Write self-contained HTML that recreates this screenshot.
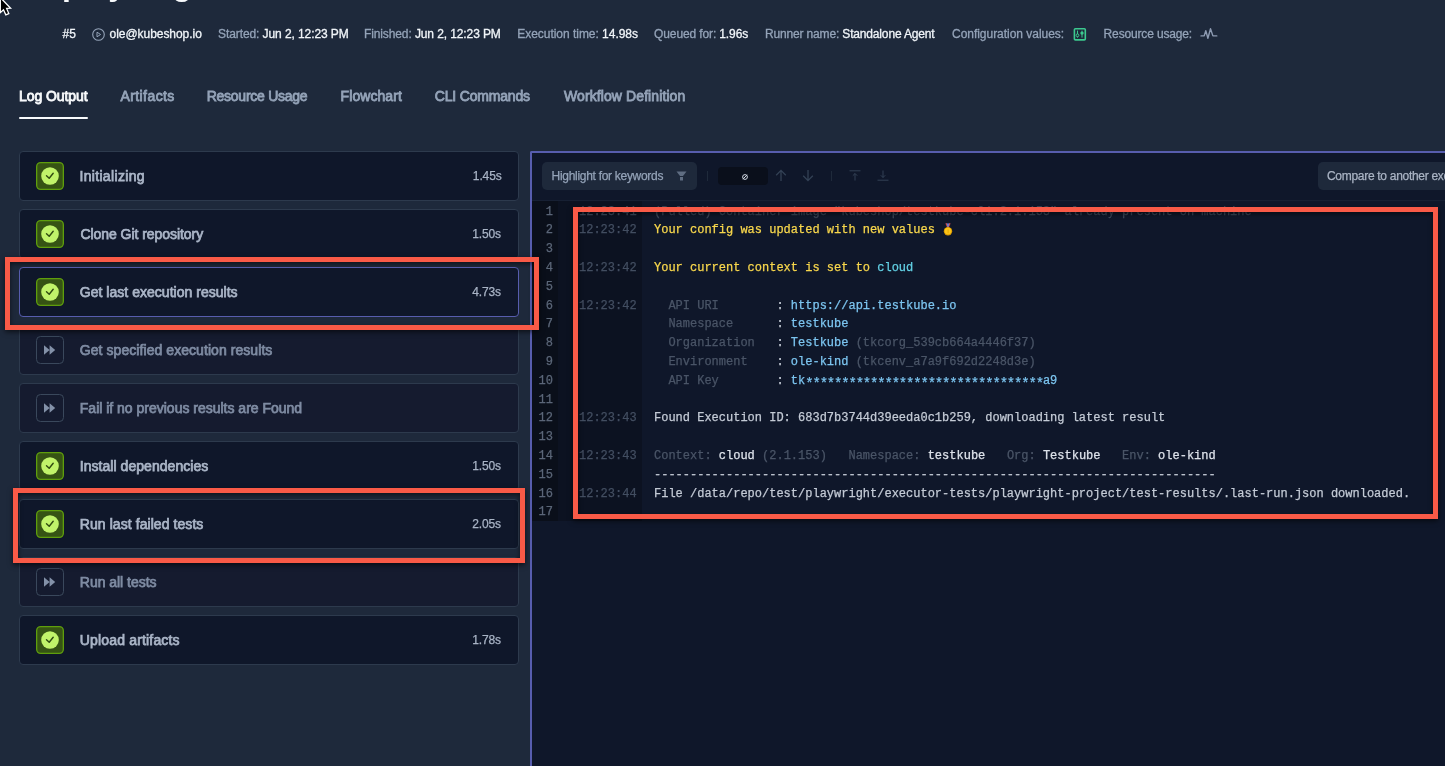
<!DOCTYPE html>
<html><head><meta charset="utf-8">
<style>
*{margin:0;padding:0;box-sizing:border-box}
html,body{width:1445px;height:766px;overflow:hidden;background:#1e293b;font-family:"Liberation Sans",sans-serif}
.a{position:absolute;white-space:pre}
body>*{will-change:transform}
.title{left:62px;top:-34px;font-size:32px;font-weight:700;color:#f8fafc}
.meta{top:27px;font-size:12px;line-height:14px;color:#94a3b8}
.meta b{font-weight:400;color:#f1f5f9}
.meta{-webkit-text-stroke:.3px currentColor}
.tab{top:88px;font-size:14px;line-height:16px;color:#94a3b8;-webkit-text-stroke:.8px currentColor}
.tab.on{color:#f8fafc}
.ul{position:absolute;left:19px;top:117px;width:69px;height:2px;background:#f8fafc;border-radius:1px}
.card{position:absolute;left:19px;width:500px;height:50px;background:#0f172a;border:1px solid #2d3a4d;border-radius:4px}
.card.sel{border-color:#575dae}
.card .ic{position:absolute;left:16px;top:10px;width:28px;height:28px}
.card .nm{position:absolute;left:60px;top:15.5px;font-size:14px;line-height:16px;color:#a9b4c6;-webkit-text-stroke:.75px currentColor;white-space:pre}
.card.sk{background:#151b2f}
.card.sk .nm{color:#7e8ba2}
.card .du{position:absolute;right:16px;top:17px;font-size:12px;line-height:14px;color:#a9b4c6;-webkit-text-stroke:.25px currentColor}
.red{position:absolute;border:5px solid #f95a47;box-shadow:0 2px 5px rgba(0,0,0,.6),inset 0 2px 5px rgba(0,0,0,.55)}
.panel{position:absolute;left:530px;top:151px;width:930px;height:640px;background:#0f172a;border-left:2px solid #575dae;border-top:2px solid #575dae;border-top-left-radius:2px}
.mono{font-family:"Liberation Mono",monospace;font-size:12px}
.hl{font-size:12px;line-height:14px;color:#94a3b8;-webkit-text-stroke:.25px currentColor}
.code{font-family:"Liberation Mono",monospace;font-size:12px;line-height:18.8px;top:49.6px;white-space:pre;-webkit-text-stroke:.25px currentColor}
.ln{left:0;width:21px;text-align:right;color:#5b6678}
.ts{left:47px;color:#434e61}
.tx{left:122px;color:#c4cbd6}
.st{font-size:14px;letter-spacing:-1.2px;line-height:0;position:relative;top:4px}
.dm{color:#3e4859}.yl{color:#f8d74c}.cy{color:#62d0e4}.bl{color:#7cc5f0}.lb{color:#4a5567}.wh{color:#c4cbd6}.br{color:#dde2ea}
</style>
<style id="cal">#c1{letter-spacing:0.336px;translate:-0.60px 0}#c2{letter-spacing:-0.047px;translate:0.40px 0}#c3{letter-spacing:0.024px;translate:-0.20px 0}#c4{letter-spacing:0.063px;translate:-0.20px 0}#c5{letter-spacing:-0.006px;translate:-0.20px 0}#c6{letter-spacing:0.042px;translate:-0.20px 0}#c7{letter-spacing:0.070px;translate:-0.20px 0}#c8{letter-spacing:-0.024px;translate:-0.20px 0}#c9{letter-spacing:0.167px;translate:-0.20px 0}#cmp{letter-spacing:-0.296px;translate:0.00px 0}#d1{letter-spacing:-0.125px;translate:-0.40px 0}#d2{letter-spacing:-0.125px;translate:-1.00px 0}#d3{letter-spacing:-0.125px;translate:-1.00px 0}#d4{letter-spacing:-0.125px;translate:-1.00px 0}#d5{letter-spacing:-0.125px;translate:-1.00px 0}#d6{letter-spacing:-0.125px;translate:-1.00px 0}#hl{letter-spacing:-0.296px;translate:-0.40px 0}#m1{letter-spacing:0.100px;translate:0.40px 0}#m2{letter-spacing:-0.050px;translate:-0.40px 0}#m3{letter-spacing:-0.087px;translate:0.00px 0}#m4{letter-spacing:-0.104px;translate:-1.10px 0}#m5{letter-spacing:-0.029px;translate:0.20px 0}#m6{letter-spacing:-0.125px;translate:0.10px 0}#m7{letter-spacing:-0.161px;translate:0.00px 0}#m8{letter-spacing:-0.030px;translate:1.00px 0}#m9{letter-spacing:-0.157px;translate:0.60px 0}#t1{letter-spacing:-0.068px;translate:0.00px 0}#t2{letter-spacing:0.425px;translate:0.40px 0}#t3{letter-spacing:-0.255px;translate:-0.30px 0}#t4{letter-spacing:0.062px;translate:0.60px 0}#t5{letter-spacing:-0.172px;translate:0.70px 0}#t6{letter-spacing:0.095px;translate:1.00px 0}</style></head><body>
<svg width="0" height="0" style="position:absolute"><defs>
<g id="iok"><rect x="0.65" y="0.65" width="26.7" height="26.7" rx="4" fill="#365314" stroke="#5f9e0c" stroke-width="1.3"/><circle cx="14" cy="14" r="8.8" fill="#c1f36a"/><path d="M10.5 13.8L13.2 16.3L17.2 11.2" fill="none" stroke="#2f4a10" stroke-width="1.4" stroke-linecap="round" stroke-linejoin="round"/></g>
<g id="isk"><rect x="0.5" y="0.5" width="27" height="27" rx="4" fill="none" stroke="#3a485c" stroke-width="1"/><path d="M8 9.2v9.6l5.6-4.8zM13.6 9.2v9.6l5.6-4.8z" fill="#8391a8"/></g>
</defs></svg>

<div class="a title">playwright</div>

<div id="m1" class="a meta" style="left:62px"><b>#5</b></div>
<svg class="a" style="left:92px;top:28px" width="13" height="13" viewBox="0 0 13 13"><circle cx="6.5" cy="6.5" r="5.8" fill="none" stroke="#94a3b8" stroke-width="1.1"/><path d="M5 4.2v4.6l3.6-2.3z" fill="none" stroke="#94a3b8" stroke-width="1" stroke-linejoin="round"/></svg>
<div id="m2" class="a meta" style="left:110px"><b>ole@kubeshop.io</b></div>
<div id="m3" class="a meta" style="left:218px">Started: <b>Jun 2, 12:23 PM</b></div>
<div id="m4" class="a meta" style="left:365px">Finished: <b>Jun 2, 12:23 PM</b></div>
<div id="m5" class="a meta" style="left:517px">Execution time: <b>14.98s</b></div>
<div id="m6" class="a meta" style="left:654px">Queued for: <b>1.96s</b></div>
<div id="m7" class="a meta" style="left:765px">Runner name: <b>Standalone Agent</b></div>
<div id="m8" class="a meta" style="left:951px">Configuration values:</div>
<div id="m9" class="a meta" style="left:1103px">Resource usage:</div>

<svg class="a" style="left:1072px;top:27px" width="16" height="15" viewBox="1072 27 16 15"><rect x="1074.4" y="28.7" width="10.9" height="11.2" rx="1" fill="none" stroke="#3cc98f" stroke-width="1.6"/><path d="M1077.5 30.6v7M1082 30.6v7" stroke="#3cc98f" stroke-width="1"/><circle cx="1077.5" cy="35.3" r="1.4" fill="#1e293b" stroke="#3cc98f" stroke-width="1"/><circle cx="1082" cy="33.1" r="1.7" fill="#3cc98f"/></svg>
<svg class="a" style="left:1199px;top:26px" width="20" height="15" viewBox="1199 26 20 15"><path d="M1201 35.9H1204.2L1205.8 30.6L1207.9 38.3L1210.5 28.8L1212.9 35.9H1216.8" fill="none" stroke="#8d9bb2" stroke-width="1.4" stroke-linejoin="round" stroke-linecap="round"/></svg>
<div id="t1" class="a tab on" style="left:19px">Log Output</div>
<div id="t2" class="a tab" style="left:120px">Artifacts</div>
<div id="t3" class="a tab" style="left:207px">Resource Usage</div>
<div id="t4" class="a tab" style="left:340px">Flowchart</div>
<div id="t5" class="a tab" style="left:434px">CLI Commands</div>
<div id="t6" class="a tab" style="left:563px">Workflow Definition</div>
<div class="ul"></div>

<div class="card" style="top:151px"><svg class="ic" width="28" height="28" viewBox="0 0 28 28"><use href="#iok"/></svg><div id="c1" class="nm">Initializing</div><div id="d1" class="du">1.45s</div></div>
<div class="card" style="top:209px"><svg class="ic" width="28" height="28" viewBox="0 0 28 28"><use href="#iok"/></svg><div id="c2" class="nm">Clone Git repository</div><div id="d2" class="du">1.50s</div></div>
<div class="card sel" style="top:267px"><svg class="ic" width="28" height="28" viewBox="0 0 28 28"><use href="#iok"/></svg><div id="c3" class="nm">Get last execution results</div><div id="d3" class="du">4.73s</div></div>
<div class="card sk" style="top:325px"><svg class="ic" width="28" height="28" viewBox="0 0 28 28"><use href="#isk"/></svg><div id="c4" class="nm">Get specified execution results</div></div>
<div class="card sk" style="top:383px"><svg class="ic" width="28" height="28" viewBox="0 0 28 28"><use href="#isk"/></svg><div id="c5" class="nm">Fail if no previous results are Found</div></div>
<div class="card" style="top:441px"><svg class="ic" width="28" height="28" viewBox="0 0 28 28"><use href="#iok"/></svg><div id="c6" class="nm">Install dependencies</div><div id="d4" class="du">1.50s</div></div>
<div class="card" style="top:499px"><svg class="ic" width="28" height="28" viewBox="0 0 28 28"><use href="#iok"/></svg><div id="c7" class="nm">Run last failed tests</div><div id="d5" class="du">2.05s</div></div>
<div class="card sk" style="top:557px"><svg class="ic" width="28" height="28" viewBox="0 0 28 28"><use href="#isk"/></svg><div id="c8" class="nm">Run all tests</div></div>
<div class="card" style="top:615px"><svg class="ic" width="28" height="28" viewBox="0 0 28 28"><use href="#iok"/></svg><div id="c9" class="nm">Upload artifacts</div><div id="d6" class="du">1.78s</div></div>

<div class="panel">
 <div class="a" style="left:10px;top:9px;width:155px;height:28px;background:#1e293b;border-radius:5px"></div>
 <div id="hl" class="a hl" style="left:20px;top:16px">Highlight for keywords</div>
 <svg class="a" style="left:144px;top:18px" width="11" height="10" viewBox="0 0 11 10"><path d="M0.5 0.5h10l-3.5 4.5h-3z" fill="#5f6d82"/><rect x="4" y="6" width="3" height="3.5" fill="#5f6d82"/></svg>
 <div class="a" style="left:175px;top:18px;width:1px;height:10px;background:#1f2a3b"></div>
 <div class="a" style="left:186px;top:14px;width:50px;height:18px;background:#0a0f1b;border-radius:4px"></div>
 <svg class="a" style="left:208.5px;top:19.5px" width="8" height="8" viewBox="0 0 8 8"><circle cx="4" cy="4" r="2.4" fill="none" stroke="#cfd6e0" stroke-width="1"/><path d="M1.8 6.2l4.4-4.4" stroke="#cfd6e0" stroke-width="1"/></svg>
 <svg class="a" style="left:243px;top:16px" width="12" height="13" viewBox="0 0 12 13"><path d="M6 12V1.5M1.2 6.2L6 1.4l4.8 4.8" fill="none" stroke="#334155" stroke-width="1.3"/></svg>
 <svg class="a" style="left:270px;top:16px" width="12" height="13" viewBox="0 0 12 13"><path d="M6 1v10.5M1.2 6.8L6 11.6l4.8-4.8" fill="none" stroke="#334155" stroke-width="1.3"/></svg>
 <div class="a" style="left:299px;top:18px;width:1px;height:10px;background:#1f2a3b"></div>
 <svg class="a" style="left:317px;top:16px" width="12" height="13" viewBox="0 0 12 13"><path d="M0.5 1.8h11M6 11.5V4.5M3.8 6.7L6 4.5 8.2 6.7" fill="none" stroke="#334155" stroke-width="1"/></svg>
 <svg class="a" style="left:345px;top:16px" width="12" height="13" viewBox="0 0 12 13"><path d="M0.5 11.2h11M6 1.5v7M3.8 6.3L6 8.5 8.2 6.3" fill="none" stroke="#334155" stroke-width="1"/></svg>
 <div class="a" style="left:786px;top:9px;width:200px;height:28px;background:#1e293b;border-radius:5px"></div>
 <div id="cmp" class="a hl" style="left:795px;top:16px;color:#aab4c4">Compare to another execution</div>
 <div class="a" style="left:0;top:47px;width:930px;height:1px;background:#172033"></div>
 <div class="a" style="left:0;top:48px;width:26px;height:320px;background:#0a0f1a"></div>
 <div class="a" style="left:26px;top:48px;width:84px;height:320px;background:#0c1221"></div>
 <div class="a code ln">1
2
3
4
5
6
7
8
9
10
11
12
13
14
15
16
17</div>
 <div class="a code ts">12:23:41
12:23:42

12:23:42

12:23:42





12:23:43

12:23:43

12:23:44</div>
 <div class="a code tx"><span class="dm">(Pulled) Container image "kubeshop/testkube-cli:2.1.153" already present on machine</span>
<span class="yl">Your config was updated with new values </span>

<span class="yl">Your current context is set to </span><span class="cy">cloud</span>

<span class="lb">  API URI        </span><span class="wh">: </span><span class="bl">https://api.testkube.io</span>
<span class="lb">  Namespace      </span><span class="wh">: </span><span class="bl">testkube</span>
<span class="lb">  Organization   </span><span class="wh">: </span><span class="bl">Testkube</span> <span class="lb">(tkcorg_539cb664a4446f37)</span>
<span class="lb">  Environment    </span><span class="wh">: </span><span class="bl">ole-kind</span> <span class="lb">(tkcenv_a7a9f692d2248d3e)</span>
<span class="lb">  API Key        </span><span class="wh">: </span><span class="bl">tk<span class="st">*********************************</span>a9</span>

<span class="wh">Found Execution ID: 683d7b3744d39eeda0c1b259, downloading latest result</span>

<span class="lb">Context: </span><span class="br">cloud</span> <span class="lb">(2.1.153)   Namespace: </span><span class="br">testkube</span><span class="lb">   Org: </span><span class="br">Testkube</span><span class="lb">   Env: </span><span class="br">ole-kind</span>
<span class="wh">------------------------------------------------------------------------------</span>
<span class="wh">File /data/repo/test/playwright/executor-tests/playwright-project/test-results/.last-run.json downloaded.</span>
</div>
 <svg class="a" style="left:410px;top:67.5px" width="12" height="16" viewBox="0 0 12 16"><path d="M4 2.2l2 4.3 2-4.3" fill="none" stroke="#c9474f" stroke-width="1.4"/><path d="M5.2 2.2l0.8 3.5 0.8-3.5" fill="none" stroke="#6a86d8" stroke-width="0.9"/><circle cx="6" cy="10.3" r="4.2" fill="#d99a00"/><circle cx="6" cy="10.1" r="3.3" fill="#fbc419"/><path d="M6.1 8.3v4" stroke="#e6a800" stroke-width="1"/></svg>
</div>

<div class="red" style="left:5px;top:257px;width:534px;height:73px"></div>
<div class="red" style="left:13px;top:488px;width:512px;height:75px"></div>
<div class="red" style="left:573px;top:207px;width:865px;height:312px"></div>
<svg class="a" style="left:0;top:0;z-index:10" width="16" height="18" viewBox="0 0 16 18"><path d="M0.3 -2.5L10.6 8.2L6.6 8.4L8.8 13.6L5.8 14.8L3.5 9.8L0.3 12.6Z" fill="#000" stroke="#fff" stroke-width="1.3" stroke-linejoin="miter"/></svg>
</body></html>
